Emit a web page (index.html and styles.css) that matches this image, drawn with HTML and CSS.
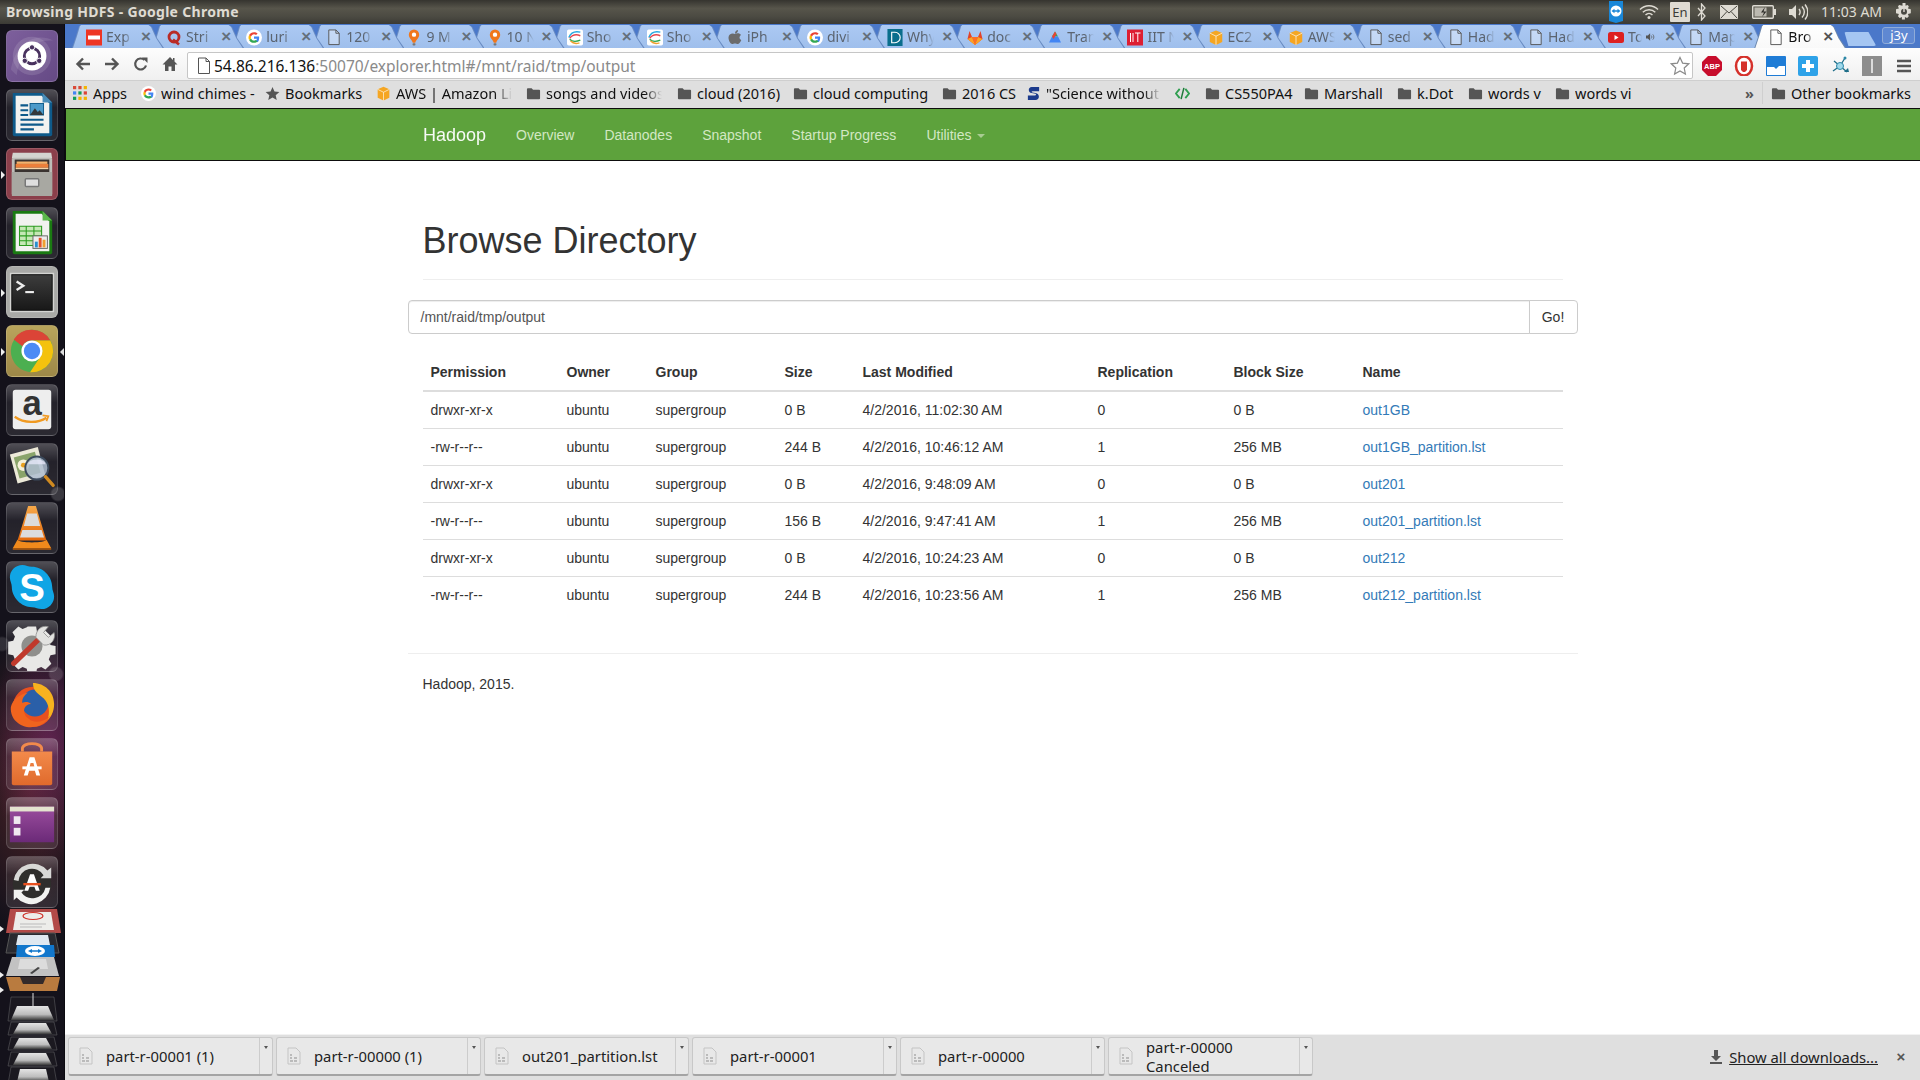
FILE: index.html
```html
<!DOCTYPE html>
<html lang="en">
<head>
<meta charset="utf-8">
<title>Browsing HDFS - Google Chrome</title>
<link rel="stylesheet" href="styles.css">
</head>
<body>
<svg class="sprite" aria-hidden="true">
  <defs>
    <linearGradient id="gCone" x1="0" x2="0" y1="0" y2="1"><stop offset="0" stop-color="#f7a94a"/><stop offset="1" stop-color="#e56a0c"/></linearGradient>
    <linearGradient id="gBag" x1="0" x2="0" y1="0" y2="1"><stop offset="0" stop-color="#f28a4b"/><stop offset="1" stop-color="#e06a2c"/></linearGradient>
    <linearGradient id="gPurple" x1="0" x2="0" y1="0" y2="1"><stop offset="0" stop-color="#9b4d9e"/><stop offset="1" stop-color="#6b2a78"/></linearGradient>
    <linearGradient id="gTerm" x1="0" x2="0" y1="0" y2="1"><stop offset="0" stop-color="#3d3d3d"/><stop offset="1" stop-color="#181818"/></linearGradient>
    <linearGradient id="gPlate" x1="0" x2="0" y1="0" y2="1"><stop offset="0" stop-color="#e4e4e4"/><stop offset=".6" stop-color="#bdbdbd"/><stop offset="1" stop-color="#3a3a3a"/></linearGradient>
  </defs>
  <symbol id="fav-doc" viewBox="0 0 16 18"><path d="M2.500 1h7.500l3.500 3.500v12h-11z" fill="#fff" fill-opacity=".35" stroke="#555" stroke-width="1"/><path d="M10 1v3.500h3.500" fill="none" stroke="#555"/></symbol>
  <symbol id="fav-g" viewBox="0 0 18 18"><circle cx="9" cy="9" r="9" fill="#fff"/><path d="M14.800 9.200c0-.5 0-1-.1-1.400H9v2.700h3.300c-.2 1-.7 1.700-1.400 2.200l2.100 1.700c1.200-1.200 1.800-3 1.800-5.200z" fill="#4285f4"/><path d="M9 15c1.700 0 3.100-.5 4-1.500l-2.100-1.700c-.5.400-1.200.6-1.900.6-1.500 0-2.900-1-3.300-2.400L3.500 11.700C4.500 13.700 6.600 15 9 15z" fill="#34a853"/><path d="M5.700 10c-.3-.7-.3-1.400 0-2.100L3.500 6.200c-.9 1.800-.9 3.800 0 5.500z" fill="#fbbc05"/><path d="M9 5.400c.9 0 1.700.3 2.300.9l1.800-1.800C12 3.500 10.600 3 9 3 6.600 3 4.500 4.300 3.500 6.300l2.200 1.700C6.100 6.500 7.500 5.400 9 5.400z" fill="#ea4335"/></symbol>
  <symbol id="fav-pin" viewBox="0 0 16 18"><path d="M8 .5a5.500 5.500 0 0 1 5.500 5.500c0 3.500-3.500 5.500-4.200 8.500H6.700C6 11.500 2.500 9.500 2.500 6A5.500 5.500 0 0 1 8 .5z" fill="#f0771c"/><circle cx="8" cy="6" r="2.300" fill="#fff"/><rect x="6.500" y="15" width="3" height="2.500" rx=".8" fill="#777"/></symbol>
  <symbol id="fav-rainbow" viewBox="0 0 18 18"><rect width="18" height="18" rx="2" fill="#fff"/><path d="M2 9c3-7 9-7 13-6" fill="none" stroke="#26a9e0" stroke-width="1.600"/><path d="M3 10c3-4 7-5 12-3" fill="none" stroke="#e5484d" stroke-width="1.600"/><path d="M3 11c3 3 7 3 12 1" fill="none" stroke="#2fa84f" stroke-width="1.600"/><path d="M4 13c3 3 7 3 10 2" fill="none" stroke="#f0a030" stroke-width="1.600"/></symbol>
  <symbol id="fav-box" viewBox="0 0 18 18"><path d="M9 1l7 3v10l-7 3.500L2 14V4z" fill="#f5a623"/><path d="M2 4l7 3.500L16 4M9 7.500v10" fill="none" stroke="#fff" stroke-opacity=".75" stroke-width="1"/></symbol>
  <symbol id="folder" viewBox="0 0 16 14"><path d="M1 2.500a1 1 0 0 1 1-1h4l1.500 1.500H14a1 1 0 0 1 1 1v8a1 1 0 0 1-1 1H2a1 1 0 0 1-1-1z" fill="#555"/></symbol>
  <symbol id="shelf-file" viewBox="0 0 14 18"><path d="M1 1h8l4 4v12H1z" fill="#e8e8e8" stroke="#c4c4c4"/><path d="M3 8h2M3 11h2M3 14h3M7 11h3M7 14h3" stroke="#8d8d8d" stroke-width="1"/></symbol>
</svg>

<div class="panel">
  <span class="panel-title">Browsing HDFS - Google Chrome</span>
  <div class="indicators">
    <svg class="ind ind-tv" viewBox="0 0 16 24"><path d="M1 1h14v20l-7 2-7-2z" fill="#1a87d8"/><circle cx="8" cy="11" r="5.500" fill="#fff"/><path d="M3.500 11l3-2.200v1.400h3V8.800l3 2.200-3 2.200v-1.400h-3v1.400z" fill="#1a87d8"/></svg>
    <svg class="ind ind-wifi" viewBox="0 0 20 16"><path d="M1 5.500c5-5 13-5 18 0M3.800 8.300c3.500-3.500 9-3.500 12.500 0M6.500 11c2-2 5-2 7 0" fill="none" stroke="#dedbd3" stroke-width="1.400"/><circle cx="10" cy="13.500" r="1.500" fill="#dedbd3"/></svg>
    <span class="ind-lang">En</span>
    <svg class="ind ind-bt" viewBox="0 0 10 18"><path d="M1 5l7 8-3.500 4V1L8 5 1 13" fill="none" stroke="#dedbd3" stroke-width="1.300"/></svg>
    <svg class="ind ind-mail" viewBox="0 0 18 14"><rect width="18" height="14" rx="1" fill="#dedbd3"/><path d="M1 1l8 7 8-7M1 13l6-6.500M17 13l-6-6.500" fill="none" stroke="#4a4942" stroke-width="1"/></svg>
    <svg class="ind ind-batt" viewBox="0 0 24 14"><rect x=".7" y=".7" width="20.600" height="12.600" rx="1" fill="#5a584f" stroke="#dedbd3" stroke-width="1.400"/><rect x="22" y="4" width="2" height="6" fill="#dedbd3"/><rect x="2.500" y="2.500" width="12" height="9" fill="#bcb9b0"/><path d="M13 2l-4 5.500h3L10 12l4.500-5.500h-3z" fill="#2e2d29"/></svg>
    <svg class="ind ind-vol" viewBox="0 0 20 18"><path d="M1 6h3l4-4v14l-4-4H1z" fill="#dedbd3"/><path d="M11 6c1.500 2 1.500 4 0 6M14 3.500c3 3.500 3 7.500 0 11M17 1.500c3.800 5 3.800 10 0 15" fill="none" stroke="#dedbd3" stroke-width="1.400"/></svg>
    <span class="clock">11:03 AM</span>
    <svg class="ind ind-gear" viewBox="0 0 16 18"><path d="M6.500 0h3v2.800l2-.8 1.300 1.300-.9 2.200 2.900.8v4l-2.900.8.9 2.200-1.700 1.700-2.200-1v2.500h-3v-2.500l-2.200 1-1.700-1.700.9-2.200-2.900-.8v-4l2.900-.8-.9-2.200L3.200 2l3.300.8z" fill="#dedbd3"/><circle cx="8" cy="8.800" r="3" fill="#4a4942"/><rect x="7.300" y="3" width="1.400" height="6" fill="#dedbd3"/></svg>
  </div>
</div>

<div class="desktop">
  <nav class="launcher">
    <div class="tile tile-ubuntu">
      <svg viewBox="0 0 52 52"><path d="M4 40C10 8 34 2 48 10 30 8 14 20 10 46z" fill="#fff" fill-opacity=".1"/><circle cx="26" cy="26" r="20" fill="#fff" fill-opacity=".12"/><circle cx="26" cy="26" r="15" fill="#fff"/><circle cx="26" cy="26" r="8" fill="none" stroke="#49325f" stroke-width="3"/><circle cx="26" cy="17" r="2.800" fill="#49325f" stroke="#fff"/><circle cx="18.500" cy="31" r="2.800" fill="#49325f" stroke="#fff"/><circle cx="33.500" cy="31" r="2.800" fill="#49325f" stroke="#fff"/></svg>
    </div>
    <div class="tile">
      <svg viewBox="0 0 52 52"><path d="M6 3h31l10 10v33a2 2 0 0 1-2 2H8a2 2 0 0 1-2-2z" fill="#0e5a8a"/><path d="M9 6h27l8 8v31H9z" fill="#f2f2f0"/><path d="M37 3l10 10H37z" fill="#4a8db8"/><path d="M14 16h8M14 21h8M14 26h8M14 31h24M14 36h24M14 41h14" stroke="#0e5a8a" stroke-width="2.200"/><rect x="24" y="14" width="14" height="12" fill="#4c9ac9" stroke="#0e5a8a"/><path d="M24 26l5-7 3 4 2-2 4 5z" fill="#33383c"/></svg>
    </div>
    <div class="tile tile-files running">
      <svg viewBox="0 0 52 52"><path d="M6 4h40l1 6H5z" fill="#d4d4d0"/><rect x="5" y="9" width="42" height="39" rx="2" fill="#bdbdb8"/><rect x="8" y="11" width="36" height="13" fill="#3a3330"/><rect x="10" y="13" width="32" height="2.500" fill="#f6b26b"/><rect x="9" y="15.500" width="34" height="4" fill="#ec7f3a"/><rect x="9" y="19.500" width="34" height="1.500" fill="#f5d4a8"/><path d="M5 24h42v24a1 1 0 0 1-1 1H6a1 1 0 0 1-1-1z" fill="#a8a8a2"/><rect x="19" y="31" width="14" height="8" rx="1" fill="#dedede" stroke="#777" stroke-width="1.500"/></svg>
    </div>
    <div class="tile">
      <svg viewBox="0 0 52 52"><path d="M6 3h31l10 10v33a2 2 0 0 1-2 2H8a2 2 0 0 1-2-2z" fill="#1a7a12"/><path d="M9 6h27l8 8v31H9z" fill="#f2f2f0"/><path d="M37 3l10 10H37z" fill="#5cb84c"/><rect x="13" y="19" width="23" height="20" fill="#c5e8b5"/><path d="M13 19h23v20H13zM13 24h23M13 29h23M13 34h23M20 19v20M28 19v20" fill="none" stroke="#2a9a1e" stroke-width="1.100"/><rect x="27" y="29" width="15" height="13" fill="#eee" stroke="#666"/><rect x="29" y="35" width="3" height="6" fill="#2a8fd0"/><rect x="33" y="31" width="3" height="10" fill="#e5512a"/><rect x="37" y="33" width="3" height="8" fill="#f0a030"/></svg>
    </div>
    <div class="tile tile-term running">
      <svg viewBox="0 0 52 52"><rect x="3" y="6" width="46" height="41" fill="#d4d4d2"/><rect x="5" y="8" width="42" height="37" fill="url(#gTerm)" stroke="#111"/><path d="M10 15l7 4.500-7 4.500" fill="none" stroke="#eee" stroke-width="2.400"/><rect x="19" y="25" width="9" height="2.200" fill="#eee"/></svg>
    </div>
    <div class="tile tile-chrome running active">
      <svg viewBox="0 0 52 52"><circle cx="26" cy="26" r="22" fill="#4caf50"/><path d="M26 4a22 22 0 0 1 19 11H26a11 11 0 0 0-10 6L7 14a22 22 0 0 1 19-10z" fill="#db4437"/><path d="M45 15a22 22 0 0 1-21 33L36 30a11 11 0 0 0-10-15z" fill="#f4c20d"/><circle cx="26" cy="26" r="11" fill="#fff"/><circle cx="26" cy="26" r="8.500" fill="#4c8bf5"/></svg>
    </div>
    <div class="tile">
      <svg viewBox="0 0 52 52"><rect x="6" y="5" width="40" height="41" rx="3" fill="#eeeeee"/><text class="ic-a" x="26" y="31" text-anchor="middle">a</text><path d="M8 33c10 7 24 7 33 1" fill="none" stroke="#f09a22" stroke-width="2.400"/><path d="M37 31.500l6 1-2 5" fill="none" stroke="#f09a22" stroke-width="1.800"/></svg>
    </div>
    <div class="tile">
      <svg viewBox="0 0 52 52"><path d="M3 11l29-8 8 30-29 8z" fill="#ece9d8"/><path d="M7 14l22-6 6 22-22 6z" fill="#8aa46a"/><circle cx="17" cy="22" r="6" fill="#f5f0d8"/><circle cx="17" cy="22" r="2.500" fill="#e8a020"/><circle cx="31" cy="25" r="12" fill="#aebdd0" fill-opacity=".85" stroke="#3c4a5c" stroke-width="2"/><path d="M22 21a9 5 0 0 1 18 0z" fill="#eef" fill-opacity=".7"/><path d="M40 34l8 9" stroke="#d08a20" stroke-width="3.500" stroke-linecap="round"/></svg>
    </div>
    <div class="tile">
      <svg viewBox="0 0 52 52"><path d="M22 3h8l11 36H11z" fill="url(#gCone)"/><path d="M21 11h10l3.500 13h-17zM16 28h20l2.500 8h-25z" fill="#dcdcdc"/><path d="M6 47l5-9c0 4 30 4 30 0l5 9z" fill="#f08a1c"/><path d="M6 47h40v1.500H6z" fill="#b85e0a"/></svg>
    </div>
    <div class="tile">
      <svg viewBox="0 0 52 52"><path d="M16 3c4 0 6 2 10 2 11 0 21 10 21 21 0 4 2 6 2 10a13 13 0 0 1-13 13c-4 0-6-2-10-2C15 47 5 37 5 26c0-4-2-6-2-10A13 13 0 0 1 16 3z" fill="#10a5e5"/><text class="ic-s" x="26" y="41" text-anchor="middle">S</text></svg>
    </div>
    <div class="tile">
      <svg viewBox="0 0 52 52"><path d="M21 3h10l1 6 5 2 5-3 7 7-3 5 2 5 6 1v10l-6 1-2 5 3 5-7 7-5-3-5 2-1 6H21l-1-6-5-2-5 3-7-7 3-5-2-5-6-1V21l6-1 2-5-3-5 7-7 5 3 5-2z" fill="#e8e8e6" transform="translate(3 3) scale(.88)"/><circle cx="26" cy="26" r="11" fill="#8f8f8c"/><path d="M7 44L35 17" stroke="#c0392b" stroke-width="5.500" stroke-linecap="round"/><path d="M30 17c0-8 6-13 13-11l-5 6 5 5 6-5c2 7-3 14-11 13z" fill="#e2e2e0" stroke="#888" stroke-width=".8"/></svg>
    </div>
    <div class="tile">
      <svg viewBox="0 0 52 52"><circle cx="27" cy="28" r="21" fill="#e8501f"/><circle cx="29" cy="24" r="14" fill="#2a5fa8"/><path d="M27 3c12 0 22 9 22 22 0 8-3 13-7 17 3-8 2-17-4-23C33 14 27 12 27 3z" fill="#f6b21f"/><path d="M4 28c-1 13 10 22 23 21 9-1 15-6 18-12-5 6-13 8-20 5-6-3-8-8-7-12 1-3 4-5 7-5-3-3-7-2-9-1-1-5 3-9 6-11-9 2-16 7-18 15z" fill="#f0641e"/></svg>
    </div>
    <div class="tile">
      <svg viewBox="0 0 52 52"><path d="M16 13v-3c0-7 20-7 20 0v3" fill="none" stroke="#f28a4b" stroke-width="3"/><path d="M5 13h42v33a2 2 0 0 1-2 2H7a2 2 0 0 1-2-2z" fill="url(#gBag)"/><path d="M23.500 19h5l6 19h-4l-1.500-5h-6L21.500 38h-4zM24.500 25l-1 4h5l-1-4z" fill="#fff"/><rect x="16" y="28.500" width="20" height="3" fill="#fff"/></svg>
    </div>
    <div class="tile">
      <svg viewBox="0 0 52 52"><rect x="3" y="9" width="46" height="37" fill="url(#gPurple)"/><rect x="3" y="9" width="46" height="5" fill="#e4e3cf"/><rect x="7" y="19" width="7" height="8" fill="#f0e8f0"/><rect x="7" y="31" width="7" height="8" fill="#f0e8f0"/></svg>
    </div>
    <div class="tile tile-last">
      <svg viewBox="0 0 52 52"><circle cx="26" cy="28" r="20" fill="#2f2e2c"/><path d="M7 24a20 20 0 0 1 35-10l4-3v11H35l3-3A14 14 0 0 0 12 25z" fill="#d8d8d6"/><path d="M45 32a20 20 0 0 1-35 10l-3 3V34h11l-3 3a14 14 0 0 0 25-5z" fill="#f2f2f0"/><path d="M24 18h4l6 17h-4l-1.500-4h-5L22 35h-4z" fill="#fff"/><rect x="17" y="27" width="18" height="2.500" fill="#e8501f"/></svg>
    </div>
    <svg class="stack" viewBox="0 0 65 175">
      <path d="M10 0h47l4 24H6z" fill="#b24a48"/><path d="M16 3h35l3 18H13z" fill="#ededea"/><ellipse cx="33" cy="7" rx="10" ry="3.500" fill="none" stroke="#d0322a" stroke-width="1.200"/><path d="M20 15h26M20 18h22" stroke="#bbb"/>
      <path d="M10 24h45l4 20H6z" fill="#2a2a30" stroke="#555"/><path d="M18 26h30l2 10H16z" fill="#dfe8f0"/>
      <path d="M17 36h37l1 12-39 0z" fill="#1177cc"/><ellipse cx="35" cy="42" rx="10" ry="5" fill="#fff"/><path d="M28 42l4-2v1.300h6V40l4 2-4 2v-1.300h-6V44z" fill="#1177cc"/>
      <path d="M12 48h42l5 19H6z" fill="#c2c2c2"/><path d="M20 50h26l2 10H18z" fill="#dcdcdc"/><path d="M30 64l8-6 2 1-8 6z" fill="#444"/>
      <path d="M6 68h54l-3 14H10z" fill="#b97b3f"/><path d="M20 68h26l-3 7H23z" fill="#332a2a"/>
      <g fill="#1b1920" stroke="#5c5c60" stroke-width=".6"><path d="M11 88h43l3 24H8z"/><path d="M11 113h43l3 13H8z"/><path d="M11 128h43l3 13H8z"/><path d="M11 143h43l3 14H8z"/><path d="M11 158h43l3 17H8z"/></g>
      <g fill="url(#gPlate)"><path d="M17 97h31l6 14H11z"/><path d="M19 114h27l6 11H13z"/><path d="M19 129h27l6 11H13z"/><path d="M19 144h27l6 12H13z"/><path d="M20 160h26l3 13H17z"/></g>
      <path d="M33 84v13" stroke="#ddd"/>
      <path d="M0 17l4 3-4 3zM0 63l4 3-4 3zM0 78l4 3-4 3z" fill="#eee"/>
    </svg>
  </nav>

  <div class="window">
    <div class="tabstrip">
      <div class="tab"><span class="tab-fill"><svg class="fav" viewBox="0 0 16 16"><rect width="16" height="16" fill="#ee3524"/><rect x="2" y="6" width="12" height="4" fill="#fff"/></svg><span class="tab-label">Exp</span><span class="tab-x">×</span></span></div>
      <div class="tab"><span class="tab-fill"><svg class="fav" viewBox="0 0 16 16"><circle cx="8" cy="7.500" r="5" fill="none" stroke="#b92b27" stroke-width="2.800"/><path d="M7 10l6 5" stroke="#b92b27" stroke-width="2.600"/></svg><span class="tab-label">Stri</span><span class="tab-x">×</span></span></div>
      <div class="tab"><span class="tab-fill"><svg class="fav"><use href="#fav-g"/></svg><span class="tab-label">luri</span><span class="tab-x">×</span></span></div>
      <div class="tab"><span class="tab-fill"><svg class="fav"><use href="#fav-doc"/></svg><span class="tab-label">120</span><span class="tab-x">×</span></span></div>
      <div class="tab"><span class="tab-fill"><svg class="fav"><use href="#fav-pin"/></svg><span class="tab-label">9 M</span><span class="tab-x">×</span></span></div>
      <div class="tab"><span class="tab-fill"><svg class="fav"><use href="#fav-pin"/></svg><span class="tab-label">10 N</span><span class="tab-x">×</span></span></div>
      <div class="tab"><span class="tab-fill"><svg class="fav"><use href="#fav-rainbow"/></svg><span class="tab-label">Sho</span><span class="tab-x">×</span></span></div>
      <div class="tab"><span class="tab-fill"><svg class="fav"><use href="#fav-rainbow"/></svg><span class="tab-label">Sho</span><span class="tab-x">×</span></span></div>
      <div class="tab"><span class="tab-fill"><svg class="fav" viewBox="0 0 16 16"><path d="M8 4.500c2-1.500 5-1 6 1-2 1.500-2 4 .3 5-.8 2-2.300 4-3.500 4-1 0-1.500-.6-2.800-.6s-1.800.6-2.800.6C3.500 14.500 1.500 11 1.500 8c0-3.500 4-5 6.500-3.500zM8 4c0-2 1.500-3.500 3-3.500C11 2.500 9.800 4 8 4z" fill="#6b6b6b"/></svg><span class="tab-label">iPh</span><span class="tab-x">×</span></span></div>
      <div class="tab"><span class="tab-fill"><svg class="fav"><use href="#fav-g"/></svg><span class="tab-label">divi</span><span class="tab-x">×</span></span></div>
      <div class="tab"><span class="tab-fill"><svg class="fav" viewBox="0 0 16 18"><rect width="16" height="18" fill="#0a6e8c"/><path d="M4.500 3.500H8a5.500 5.500 0 0 1 0 11H4.500z" fill="none" stroke="#fff" stroke-width="1.200"/></svg><span class="tab-label">Why</span><span class="tab-x">×</span></span></div>
      <div class="tab"><span class="tab-fill"><svg class="fav" viewBox="0 0 16 16"><path d="M8 15.500L.5 9.500 2.500 1.500l2.500 6h6l2.500-6 2 8z" fill="#e24329"/><path d="M8 15.500L5 7.500h6z" fill="#fc6d26"/><path d="M.5 9.500L8 15.500 5 7.500zM15.500 9.500L8 15.500l3-8z" fill="#fca326"/></svg><span class="tab-label">doc</span><span class="tab-x">×</span></span></div>
      <div class="tab"><span class="tab-fill"><svg class="fav" viewBox="0 0 16 16"><path d="M8 2l3 5H5z" fill="#34a853"/><path d="M5 7h6l3 6H2z" fill="#4285f4"/><path d="M5 7l3-5 1.500 2.500L6.500 9.500z" fill="#ea4335"/></svg><span class="tab-label">Tran</span><span class="tab-x">×</span></span></div>
      <div class="tab"><span class="tab-fill"><svg class="fav" viewBox="0 0 16 16"><rect width="16" height="16" fill="#dd1e32"/><path d="M3.500 3.500v9M6 3.500v9M8 3.500h5.500M10.800 3.500v9" stroke="#fff" stroke-width="1"/></svg><span class="tab-label">IIT N</span><span class="tab-x">×</span></span></div>
      <div class="tab"><span class="tab-fill"><svg class="fav"><use href="#fav-box"/></svg><span class="tab-label">EC2</span><span class="tab-x">×</span></span></div>
      <div class="tab"><span class="tab-fill"><svg class="fav"><use href="#fav-box"/></svg><span class="tab-label">AWS</span><span class="tab-x">×</span></span></div>
      <div class="tab"><span class="tab-fill"><svg class="fav"><use href="#fav-doc"/></svg><span class="tab-label">sed</span><span class="tab-x">×</span></span></div>
      <div class="tab"><span class="tab-fill"><svg class="fav"><use href="#fav-doc"/></svg><span class="tab-label">Had</span><span class="tab-x">×</span></span></div>
      <div class="tab"><span class="tab-fill"><svg class="fav"><use href="#fav-doc"/></svg><span class="tab-label">Had</span><span class="tab-x">×</span></span></div>
      <div class="tab"><span class="tab-fill"><svg class="fav" viewBox="0 0 16 16"><rect y="2.500" width="16" height="11" rx="2.500" fill="#dd2020"/><path d="M6.500 5.500l4 2.500-4 2.500z" fill="#fff"/></svg><span class="tab-label tab-label-short">To</span><svg class="tab-audio" viewBox="0 0 12 12"><path d="M0 4h2.500l3-3v10l-3-3H0z" fill="#555"/><path d="M7 4c1 1 1 3 0 4M9 2.500c2 2 2 5 0 7" fill="none" stroke="#555"/></svg><span class="tab-x">×</span></span></div>
      <div class="tab"><span class="tab-fill"><svg class="fav"><use href="#fav-doc"/></svg><span class="tab-label">Map</span><span class="tab-x">×</span></span></div>
      <div class="tab tab-active"><span class="tab-fill"><svg class="fav"><use href="#fav-doc"/></svg><span class="tab-label">Bro</span><span class="tab-x">×</span></span></div>
      <div class="newtab"></div>
      <div class="profile">j3y</div>
    </div>

    <div class="toolbar">
      <svg class="tb" viewBox="0 0 16 16"><path d="M15 8H3M8 2.500L2.500 8 8 13.500" fill="none" stroke="#555" stroke-width="2.400"/></svg>
      <svg class="tb" viewBox="0 0 16 16"><path d="M1 8h12M8 2.500L13.500 8 8 13.500" fill="none" stroke="#555" stroke-width="2.400"/></svg>
      <svg class="tb" viewBox="0 0 16 16"><path d="M13 9.500A5.500 5.500 0 1 1 11.500 4" fill="none" stroke="#555" stroke-width="2.200"/><path d="M9 1.500h5.500V7z" fill="#555"/></svg>
      <svg class="tb" viewBox="0 0 16 16"><path d="M8 1L.5 8.500h2.500V15h3.500v-4.500h3V15H13V8.500h2.500L12.500 5.500V2H11v2z" fill="#555"/></svg>
      <div class="omnibox">
        <svg class="omni-doc"><use href="#fav-doc"/></svg>
        <span class="url"><b>54.86.216.136</b>:50070/explorer.html#/mnt/raid/tmp/output</span>
        <svg class="omni-star" viewBox="0 0 20 20"><path d="M10 1.500l2.600 5.600 6.100.7-4.500 4.200 1.200 6L10 15l-5.400 3 1.200-6-4.500-4.200 6.100-.7z" fill="#fff" stroke="#8a8a8a" stroke-width="1.200"/></svg>
      </div>
      <div class="ext-row">
        <svg class="ext" viewBox="0 0 20 20"><path d="M6 0h8l6 6v8l-6 6H6l-6-6V6z" fill="#c70d2c"/><text class="ext-abp" x="10" y="13" text-anchor="middle">ABP</text></svg>
        <svg class="ext" viewBox="0 0 20 20"><ellipse cx="10" cy="10" rx="8" ry="9.500" fill="#fff" stroke="#d5312b" stroke-width="2.500"/><path d="M7 5.500h6V14l-2 2H9l-2-2z" fill="#d5312b"/></svg>
        <svg class="ext" viewBox="0 0 20 20"><rect width="20" height="20" rx="1" fill="#1f7cd6"/><path d="M1 11h7l2 2h9v6H1z" fill="#fff"/><path d="M10 13l3-3h6v3" fill="#fff"/></svg>
        <svg class="ext" viewBox="0 0 20 20"><rect width="20" height="20" rx="2" fill="#2ea2e8"/><path d="M8 4h4v4h4v4h-4v4H8v-4H4V8h4z" fill="#fff"/></svg>
        <svg class="ext" viewBox="0 0 20 20"><path d="M4 5l6 5M15 2l-5 8M10 10l-7 5M10 10l7 6" stroke="#1f6e88" stroke-width="1.300" fill="none"/><circle cx="10" cy="10" r="3.500" fill="#9fd8ea" stroke="#2c88a8"/><circle cx="15" cy="2" r="1.500" fill="#2c88a8"/><path d="M14 16l5 0-1-4z" fill="#1f6e88"/></svg>
        <svg class="ext" viewBox="0 0 20 20"><rect width="20" height="20" fill="#8d8d8d"/><rect x="9" y="3" width="2" height="14" fill="#dcdcdc"/></svg>
        <svg class="ext ext-menu" viewBox="0 0 14 14"><path d="M0 2h14M0 7h14M0 12h14" stroke="#555" stroke-width="2.500"/></svg>
      </div>
    </div>

    <div class="bookmarks">
      <span class="bm bm-apps"><svg class="bm-ic" viewBox="0 0 14 14"><g fill="#d94a38"><rect width="3" height="3"/><rect x="5" width="3" height="3"/><rect x="10" width="3" height="3" fill="#f4b400"/></g><g fill="#4285f4"><rect y="5" width="3" height="3"/><rect x="5" y="5" width="3" height="3" fill="#0f9d58"/><rect x="10" y="5" width="3" height="3" fill="#db4437"/></g><g fill="#0f9d58"><rect y="10" width="3" height="3"/><rect x="5" y="10" width="3" height="3" fill="#f4b400"/><rect x="10" y="10" width="3" height="3" fill="#f4b400"/></g></svg><span class="bm-t">Apps</span></span>
      <span class="bm bm-wind"><svg class="bm-ic"><use href="#fav-g"/></svg><span class="bm-t">wind chimes -</span></span>
      <span class="bm bm-marks"><svg class="bm-ic" viewBox="0 0 16 16"><path d="M8 1l2.100 4.800 5.200.5-3.900 3.500 1.100 5.100L8 12.300l-4.500 2.600 1.100-5.100L.7 6.300l5.200-.5z" fill="#555"/></svg><span class="bm-t">Bookmarks</span></span>
      <span class="bm bm-aws"><svg class="bm-ic"><use href="#fav-box"/></svg><span class="bm-t bm-fade">AWS | Amazon Linux</span></span>
      <span class="bm bm-songs"><svg class="bm-ic"><use href="#folder"/></svg><span class="bm-t bm-fade">songs and videos</span></span>
      <span class="bm bm-c16"><svg class="bm-ic"><use href="#folder"/></svg><span class="bm-t">cloud (2016)</span></span>
      <span class="bm bm-cc"><svg class="bm-ic"><use href="#folder"/></svg><span class="bm-t">cloud computing</span></span>
      <span class="bm bm-cs16"><svg class="bm-ic"><use href="#folder"/></svg><span class="bm-t">2016 CS</span></span>
      <span class="bm bm-sci"><svg class="bm-ic" viewBox="0 0 16 16"><path d="M14 1H6C2 1 2 7 6 7.500l4 .8c1 .3 1 1.700-.5 1.700H2v5h8c5 0 5-7 0-7.500l-3-.5c-1.500-.3-1-1.500 0-1.500h7z" fill="#1b3a8c"/></svg><span class="bm-t bm-fade">"Science without</span></span>
      <span class="bm bm-code"><svg class="bm-ic" viewBox="0 0 16 16"><path d="M5 3L1 8l4 5M11 3l4 5-4 5" fill="none" stroke="#2e9e4f" stroke-width="2"/><path d="M9.500 2l-3 12" stroke="#1f7a3a" stroke-width="1.600"/></svg></span>
      <span class="bm bm-cs5"><svg class="bm-ic"><use href="#folder"/></svg><span class="bm-t">CS550PA4</span></span>
      <span class="bm bm-mar"><svg class="bm-ic"><use href="#folder"/></svg><span class="bm-t">Marshall</span></span>
      <span class="bm bm-kd"><svg class="bm-ic"><use href="#folder"/></svg><span class="bm-t">k.Dot</span></span>
      <span class="bm bm-wv"><svg class="bm-ic"><use href="#folder"/></svg><span class="bm-t">words v</span></span>
      <span class="bm bm-wvi"><svg class="bm-ic"><use href="#folder"/></svg><span class="bm-t">words vi</span></span>
      <span class="bm-more">»</span>
      <span class="bm bm-other"><svg class="bm-ic"><use href="#folder"/></svg><span class="bm-t">Other bookmarks</span></span>
    </div>

    <div class="page">
      <header class="navbar">
        <div class="nav-inner">
          <a class="brand">Hadoop</a>
          <a class="nav-link">Overview</a>
          <a class="nav-link">Datanodes</a>
          <a class="nav-link">Snapshot</a>
          <a class="nav-link">Startup Progress</a>
          <a class="nav-link">Utilities <span class="caret"></span></a>
        </div>
      </header>
      <main class="container">
        <div class="page-header"><h1>Browse Directory</h1></div>
        <div class="input-group">
          <div class="path-input">/mnt/raid/tmp/output</div>
          <div class="go-btn">Go!</div>
        </div>
        <table class="listing">
          <colgroup>
            <col class="c-perm"><col class="c-owner"><col class="c-group"><col class="c-size"><col class="c-mod"><col class="c-rep"><col class="c-block"><col class="c-name">
          </colgroup>
          <thead>
            <tr><th>Permission</th><th>Owner</th><th>Group</th><th>Size</th><th>Last Modified</th><th>Replication</th><th>Block Size</th><th>Name</th></tr>
          </thead>
          <tbody>
            <tr><td>drwxr-xr-x</td><td>ubuntu</td><td>supergroup</td><td>0 B</td><td>4/2/2016, 11:02:30 AM</td><td>0</td><td>0 B</td><td><a class="link">out1GB</a></td></tr>
            <tr><td>-rw-r--r--</td><td>ubuntu</td><td>supergroup</td><td>244 B</td><td>4/2/2016, 10:46:12 AM</td><td>1</td><td>256 MB</td><td><a class="link">out1GB_partition.lst</a></td></tr>
            <tr><td>drwxr-xr-x</td><td>ubuntu</td><td>supergroup</td><td>0 B</td><td>4/2/2016, 9:48:09 AM</td><td>0</td><td>0 B</td><td><a class="link">out201</a></td></tr>
            <tr><td>-rw-r--r--</td><td>ubuntu</td><td>supergroup</td><td>156 B</td><td>4/2/2016, 9:47:41 AM</td><td>1</td><td>256 MB</td><td><a class="link">out201_partition.lst</a></td></tr>
            <tr><td>drwxr-xr-x</td><td>ubuntu</td><td>supergroup</td><td>0 B</td><td>4/2/2016, 10:24:23 AM</td><td>0</td><td>0 B</td><td><a class="link">out212</a></td></tr>
            <tr><td>-rw-r--r--</td><td>ubuntu</td><td>supergroup</td><td>244 B</td><td>4/2/2016, 10:23:56 AM</td><td>1</td><td>256 MB</td><td><a class="link">out212_partition.lst</a></td></tr>
          </tbody>
        </table>
        <footer class="page-footer"><p>Hadoop, 2015.</p></footer>
      </main>
    </div>

    <div class="shelf">
      <div class="dl"><svg class="dl-ic"><use href="#shelf-file"/></svg><span class="dl-name">part-r-00001 (1)</span><span class="dl-drop"></span></div>
      <div class="dl"><svg class="dl-ic"><use href="#shelf-file"/></svg><span class="dl-name">part-r-00000 (1)</span><span class="dl-drop"></span></div>
      <div class="dl"><svg class="dl-ic"><use href="#shelf-file"/></svg><span class="dl-name">out201_partition.lst</span><span class="dl-drop"></span></div>
      <div class="dl"><svg class="dl-ic"><use href="#shelf-file"/></svg><span class="dl-name">part-r-00001</span><span class="dl-drop"></span></div>
      <div class="dl"><svg class="dl-ic"><use href="#shelf-file"/></svg><span class="dl-name">part-r-00000</span><span class="dl-drop"></span></div>
      <div class="dl"><svg class="dl-ic"><use href="#shelf-file"/></svg><span class="dl-name dl-two"><span>part-r-00000</span><span>Canceled</span></span><span class="dl-drop"></span></div>
      <div class="shelf-end">
        <svg class="show-ic" viewBox="0 0 12 14"><path d="M4 0h4v6h3L6 11 1 6h3z" fill="#555"/><rect y="12" width="12" height="2" fill="#555"/></svg>
        <a class="show-all">Show all downloads...</a>
        <span class="shelf-x">×</span>
      </div>
    </div>
  </div>
</div>
</body>
</html>
```

FILE: styles.css
```css
* { box-sizing: border-box; }
html, body { margin: 0; height: 100%; }
body {
  width: 1920px; height: 1080px; overflow: hidden;
  display: flex; flex-direction: column;
  font-family: "Liberation Sans", Arial, sans-serif;
  font-size: 14px; line-height: 20px; color: #333; background: #fff;
}
.sprite { position: absolute; width: 0; height: 0; }

/* Top panel */
.panel {
  flex: 0 0 24px; display: flex; align-items: center; justify-content: space-between;
  padding-left: 6px;
  background: linear-gradient(#35342f, #57554b 35%, #4b4a42 70%, #3b3a35);
  color: #dfdbd2; font-family: "Noto Sans", sans-serif; font-size: 14px;
}
.panel-title { font-weight: 700; letter-spacing: .3px; }
.indicators { display: flex; align-items: center; height: 24px; }
.ind { display: block; flex: none; }
.ind-tv { width: 16px; height: 24px; margin-right: 15px; }
.ind-wifi { width: 20px; height: 16px; margin-right: 11px; }
.ind-lang { width: 20px; height: 20px; margin-right: 7px; background: #dfdbd2; color: #3c3b37; font-size: 13px; line-height: 20px; text-align: center; border-radius: 1px; }
.ind-bt { width: 10px; height: 18px; margin-right: 13px; }
.ind-mail { width: 18px; height: 14px; margin-right: 14px; }
.ind-batt { width: 24px; height: 14px; margin-right: 12px; }
.ind-vol { width: 20px; height: 18px; margin-right: 13px; }
.clock { width: 62px; margin-right: 13px; white-space: nowrap; }
.ind-gear { width: 16px; height: 18px; margin-right: 8px; }

.desktop { flex: 1; min-height: 0; display: flex; }

/* Launcher */
.launcher {
  flex: 0 0 65px; display: flex; flex-direction: column; gap: 7px;
  padding: 6px 0 0 6px; overflow: hidden; border-right: 1px solid #0b0a10;
  background:
    radial-gradient(circle at 58px 470px, rgba(255,255,255,.16) 0 6px, transparent 8px),
    radial-gradient(circle at 2px 620px, rgba(255,255,255,.12) 0 6px, transparent 8px),
    radial-gradient(circle at 56px 650px, rgba(255,255,255,.15) 0 6px, transparent 8px),
    radial-gradient(ellipse 60px 120px at 50px 720px, rgba(170,50,160,.35), transparent),
    radial-gradient(ellipse 70px 150px at 30px 760px, rgba(130,50,50,.5), transparent),
    #14121b;
}
.tile {
  position: relative; flex: 0 0 52px; width: 52px; height: 52px; border-radius: 6px;
  border: 1px solid rgba(255,255,255,.14);
  background: linear-gradient(rgba(255,255,255,.26), rgba(255,255,255,.07) 35%, rgba(255,255,255,.1));
}
.tile svg { display: block; width: 50px; height: 50px; }
.tile-ubuntu { background: linear-gradient(135deg, #7d5f9c, #654a85); }
.tile-files { background: #8b3f4b; }
.tile-term { background: #a9a9a7; }
.tile-chrome { background: linear-gradient(#b9a45c, #9d8848); }
.tile-last { margin-bottom: -6px; }
.running::before {
  content: ""; position: absolute; left: -6px; top: 22px;
  border-left: 4px solid #eee; border-top: 4px solid transparent; border-bottom: 4px solid transparent;
}
.active::after {
  content: ""; position: absolute; right: -7px; top: 22px;
  border-right: 4px solid #ddd; border-top: 4px solid transparent; border-bottom: 4px solid transparent;
}
.stack { display: block; flex: none; width: 65px; height: 175px; margin-left: -6px; }
.ic-a { font: 700 36px "Liberation Sans", sans-serif; fill: #333; }
.ic-s { font: 700 40px "Liberation Sans", sans-serif; fill: #fff; }

/* Browser window */
.window { flex: 1; min-width: 0; display: flex; flex-direction: column; }
.tabstrip {
  flex: 0 0 24px; display: flex; align-items: stretch; padding-left: 7px;
  background: linear-gradient(#4a78ca 80%, #4d79c4);
  font-family: "Noto Sans", sans-serif; font-size: 14px; color: #5b6470;
}
.tab {
  position: relative; flex: 0 0 92px; margin-right: -11.900px; height: 24px; padding-top: 1px;
  background: #6a8cc2;
  clip-path: polygon(0 100%, 4px 12px, 7px 2px, 9px 1px, 77px 1px, 80px 3px, 85px 14px, 92px 100%);
}
.tab-fill {
  display: flex; align-items: center; height: 100%; padding: 1px 0 0 14px;
  background: linear-gradient(#acc9f3, #9fbfec);
  clip-path: polygon(1px 100%, 5px 11px, 8px 1px, 9px 0, 76.500px 0, 79px 2px, 84px 13px, 90.500px 100%);
}
.tab-active { z-index: 30; background: #6b87ad; }
.tab-active .tab-fill { background: linear-gradient(#fff, #f9f9f9); }
.tab-active .tab-label { color: #111; }
.tab:nth-child(1) { z-index: 22; } .tab:nth-child(2) { z-index: 21; } .tab:nth-child(3) { z-index: 20; }
.tab:nth-child(4) { z-index: 19; } .tab:nth-child(5) { z-index: 18; } .tab:nth-child(6) { z-index: 17; }
.tab:nth-child(7) { z-index: 16; } .tab:nth-child(8) { z-index: 15; } .tab:nth-child(9) { z-index: 14; }
.tab:nth-child(10) { z-index: 13; } .tab:nth-child(11) { z-index: 12; } .tab:nth-child(12) { z-index: 11; }
.tab:nth-child(13) { z-index: 10; } .tab:nth-child(14) { z-index: 9; } .tab:nth-child(15) { z-index: 8; }
.tab:nth-child(16) { z-index: 7; } .tab:nth-child(17) { z-index: 6; } .tab:nth-child(18) { z-index: 5; }
.tab:nth-child(19) { z-index: 4; } .tab:nth-child(20) { z-index: 3; } .tab:nth-child(21) { z-index: 2; }
.fav { display: block; flex: none; width: 16px; height: 17px; margin-right: 4px; }
.tab-label {
  flex: 0 0 27px; white-space: nowrap; overflow: hidden;
  -webkit-mask-image: linear-gradient(90deg, #000 65%, transparent);
  mask-image: linear-gradient(90deg, #000 65%, transparent);
}
.tab-label-short { flex-basis: 14px; }
.tab-audio { flex: none; width: 9px; height: 10px; margin: 0 2px 0 4px; }
.tab-x { flex: none; width: 12px; margin-left: 7px; text-align: center; font-size: 17px; line-height: 16px; color: #64707c; font-family: "Liberation Sans", sans-serif; font-weight: 700; }
.tab-active .tab-x { color: #555; }
.newtab {
  flex: none; width: 32px; height: 14px; margin: 8px 0 0 10px; background: #a5c6f2; border-radius: 2px;
  clip-path: polygon(0 0, 24px 0, 100% 100%, 4px 100%);
}
.profile {
  flex: none; width: 33px; height: 17px; margin: 3px 0 0 6px;
  border: 1px solid #8fabd8; border-radius: 3px; background: #5f88d2;
  color: #fff; font-size: 13px; line-height: 15px; text-align: center;
}

.toolbar {
  flex: 0 0 32px; display: flex; align-items: center; padding-left: 10px;
  background: linear-gradient(#fdfdfd, #f0f0f0);
  font-family: "Noto Sans", sans-serif;
}
.tb { display: block; flex: none; width: 16px; height: 16px; margin-right: 13px; }
.omnibox {
  flex: 0 0 1506px; height: 27px; margin: 3px 0 0 -4px;
  display: flex; align-items: center; padding: 0 2px 0 8px;
  background: #fff; border: 1px solid #c6c6c6; border-radius: 2px;
}
.omni-doc { display: block; flex: none; width: 16px; height: 18px; margin-right: 2px; }
.url { flex: 1; font-size: 15.500px; color: #8a8a8a; white-space: nowrap; }
.url b { font-weight: 400; color: #111; }
.omni-star { flex: none; width: 20px; height: 20px; margin-right: 0; }
.ext-row { flex: 1; display: flex; align-items: center; padding: 3px 0 0 9px; gap: 12px; }
.ext { display: block; flex: none; width: 20px; height: 20px; }
.ext-menu { width: 14px; height: 14px; margin-left: 3px; }
.ext-abp { font: 700 7.500px "Liberation Sans", sans-serif; fill: #fff; }

.bookmarks {
  flex: 0 0 28px; display: flex; align-items: center; padding: 0 0 3px 8px;
  background: #dfdfdf; border-top: 1px solid #cfcfcf;
  font-family: "Noto Sans", sans-serif; font-size: 14.500px; color: #111;
}
.bm { flex: none; display: flex; align-items: center; gap: 5px; white-space: nowrap; overflow: hidden; }
.bm-ic { display: block; flex: none; width: 15px; height: 15px; }
.bm-t { flex: 1; overflow: hidden; }
.bm-fade { -webkit-mask-image: linear-gradient(90deg, #000 85%, transparent); mask-image: linear-gradient(90deg, #000 85%, transparent); }
.bm-apps { width: 68px; } .bm-wind { width: 124px; } .bm-marks { width: 111px; } .bm-aws { width: 136px; margin-right: 14px; }
.bm-songs { width: 136px; margin-right: 15px; } .bm-c16 { width: 116px; } .bm-cc { width: 149px; } .bm-cs16 { width: 84px; }
.bm-sci { width: 135px; margin-right: 14px; } .bm-code { width: 30px; } .bm-cs5 { width: 99px; } .bm-mar { width: 93px; }
.bm-kd { width: 71px; } .bm-wv { width: 87px; } .bm-wvi { width: 190px; }
.bm-more { flex: 0 0 18px; color: #555; font-weight: 700; border-right: 1px solid #cfcfcf; line-height: 22px; }
.bm-other { flex: 1; padding-left: 8px; }

/* Page */
.page { flex: 1; min-height: 0; background: #fff; }
.navbar { height: 53px; background: #5da23c; border: 1px solid #0d0d0d; border-width: 1px 0 1px 1px; }
.nav-inner { width: 1170px; margin: 0 auto; padding-left: 15px; display: flex; align-items: center; height: 51px; }
.brand { font-size: 18px; color: #fff; opacity: .95; margin-right: 15px; }
.nav-link { padding: 0 15px; color: #d3e8c3; white-space: nowrap; }
.caret { display: inline-block; margin-left: 2px; vertical-align: middle; border-top: 4px solid #a9cc92; border-left: 4px solid transparent; border-right: 4px solid transparent; }
.container { width: 1170px; margin: 0 auto; }
.page-header { margin: 60px 15px 20px; padding-bottom: 18px; border-bottom: 1px solid #eee; }
h1 { margin: 0; font-size: 36px; line-height: 39.600px; font-weight: 500; color: #333; }
.input-group { display: flex; height: 34px; margin-bottom: 20px; }
.path-input { flex: 1; padding: 6px 12px; border: 1px solid #ccc; border-radius: 4px 0 0 4px; color: #555; box-shadow: inset 0 1px 1px rgba(0,0,0,.075); }
.go-btn { flex: 0 0 49px; margin-left: -1px; padding: 6px 0; text-align: center; border: 1px solid #ccc; border-radius: 0 4px 4px 0; color: #333; }
.listing { width: 1140px; margin: 0 15px 19px; border-collapse: collapse; table-layout: fixed; }
.listing th, .listing td { padding: 8px; text-align: left; }
.listing th { font-weight: 700; border-bottom: 2px solid #ddd; }
.listing td { border-top: 1px solid #ddd; }
.listing tbody tr:first-child td { border-top: 0; }
.c-perm { width: 136px; } .c-owner { width: 89px; } .c-group { width: 129px; } .c-size { width: 78px; }
.c-mod { width: 235px; } .c-rep { width: 136px; } .c-block { width: 129px; } .c-name { width: 208px; }
.link { color: #337ab7; }
.page-footer { margin-top: 40px; padding: 20px 15px 0; border-top: 1px solid #eee; }
.page-footer p { margin: 0; }

/* Download shelf */
.shelf {
  flex: 0 0 46px; display: flex; gap: 3.500px; padding: 3px 0 4px 3px;
  background: #dfdfdf; box-shadow: inset 0 1px 0 #f2f2f2;
  font-family: "Noto Sans", sans-serif; font-size: 14.800px; color: #222;
}
.dl {
  flex: 0 0 204.500px; display: flex; align-items: center; height: 39px;
  background: #e8e8e8; border: 1px solid #c8c8c8; border-bottom: 2px solid #a4a4a4; border-radius: 3px;
}
.dl-ic { display: block; flex: none; width: 14px; height: 18px; margin: 0 13px 0 10px; }
.dl-name { flex: 1; white-space: nowrap; }
.dl-two { display: flex; flex-direction: column; line-height: 19px; margin-top: 1px; }
.dl-drop { flex: 0 0 13px; align-self: stretch; position: relative; border-left: 1px solid #ccc; }
.dl-drop::after { content: ""; position: absolute; left: 4px; top: 8px; border-top: 3px solid #555; border-left: 2.500px solid transparent; border-right: 2.500px solid transparent; }
.shelf-end { flex: 1; display: flex; align-items: center; justify-content: flex-end; height: 39px; }
.show-ic { display: block; flex: none; width: 12px; height: 14px; margin-right: 7px; }
.show-all { color: #222; text-decoration: underline; white-space: nowrap; }
.shelf-x { width: 14px; margin: 0 12px 0 16px; color: #555; font-size: 15px; font-weight: 700; text-align: center; font-family: "Liberation Sans", sans-serif; }
```
